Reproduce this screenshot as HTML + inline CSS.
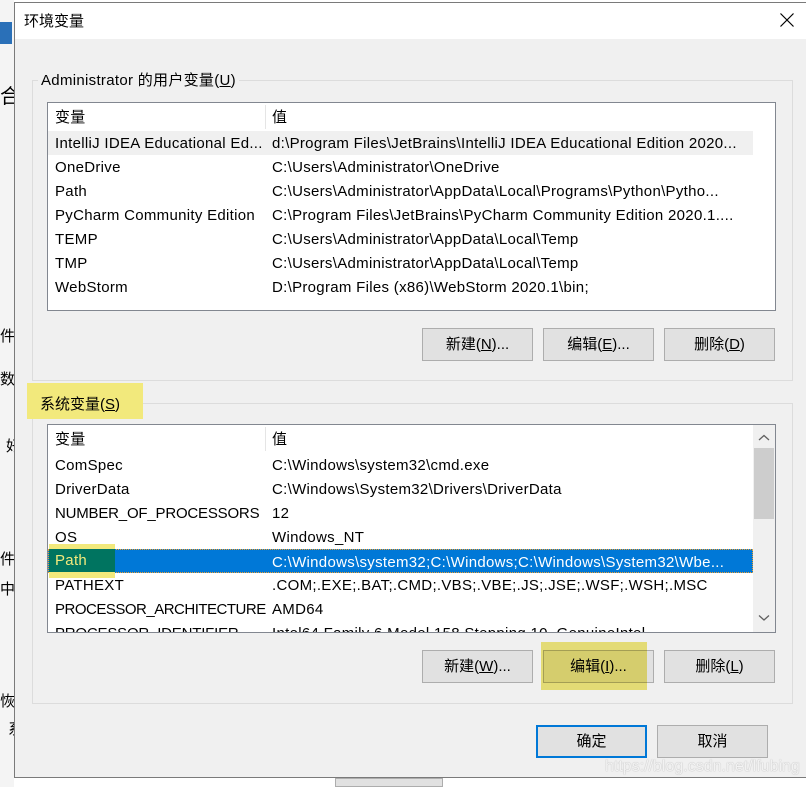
<!DOCTYPE html>
<html><head><meta charset="utf-8"><style>
*{box-sizing:border-box;margin:0;padding:0}
body{width:806px;height:787px;overflow:hidden;background:#fff;position:relative;font-family:"Liberation Sans","Noto Sans CJK SC",sans-serif;font-size:15px;color:#000}
.a{position:absolute}
.dlg{left:14px;top:2px;width:800px;height:776px;background:#f0f0f0;border:1px solid #7a7a7a}
.title{left:15px;top:3px;width:791px;height:36px;background:#fff}
.grp{border:1px solid #dcdcdc}
.lb{background:#fff;border:1px solid #828790;overflow:hidden}
.row{position:absolute;left:0;height:24px;line-height:25px;white-space:nowrap;width:705px;letter-spacing:0.3px}
.row span{position:absolute;left:7px}
.row b{font-weight:normal;position:absolute;left:224px}
.btn{position:absolute;width:111px;height:33px;background:#e1e1e1;border:1px solid #adadad;text-align:center;line-height:31px;font-size:15px}
u{text-decoration:underline}
.t{letter-spacing:-0.2px}
</style></head><body>
<div class="a" style="left:0;top:0;width:14px;height:787px;background:#f4f4f4"></div>
<div class="a" style="left:0;top:22px;width:12px;height:22px;background:#2a70b8"></div>
<div class="a" style="left:0;top:80px;font-size:20px;">合</div>
<div class="a" style="left:0;top:325px;">件</div>
<div class="a" style="left:0;top:368px;">数</div>
<div class="a" style="left:6px;top:435px;">好</div>
<div class="a" style="left:0;top:548px;">件</div>
<div class="a" style="left:0;top:578px;">中</div>
<div class="a" style="left:0;top:690px;">恢</div>
<div class="a" style="left:8px;top:718px;">系</div>
<div class="a" style="left:335px;top:778px;width:108px;height:9px;background:#e1e1e1;border:1px solid #adadad"></div>
<div class="a dlg"></div>
<div class="a title"></div>
<div class="a" style="left:24px;top:10px;font-size:15px">环境变量</div>
<svg class="a" style="left:780px;top:13px" width="14" height="14"><path d="M0.5 0.5L13.5 13.5M13.5 0.5L0.5 13.5" stroke="#000" stroke-width="1.2"/></svg>

<div class="a grp" style="left:32px;top:80px;width:761px;height:301px"></div>
<div class="a" style="left:38px;top:69px;background:#f0f0f0;padding:0 3px;letter-spacing:0.3px">Administrator 的用户变量(<u>U</u>)</div>
<div class="a lb" style="left:47px;top:102px;width:729px;height:209px">
 <div class="row" style="top:2px"><span>变量</span><b>值</b></div>
 <div class="a" style="left:217px;top:2px;width:1px;height:24px;background:#e5e5e5"></div>
 <div class="row" style="top:28px;background:#f0f0f0"><span>IntelliJ IDEA Educational Ed...</span><b>d:\Program Files\JetBrains\IntelliJ IDEA Educational Edition 2020...</b></div>
 <div class="row" style="top:52px"><span>OneDrive</span><b>C:\Users\Administrator\OneDrive</b></div>
 <div class="row" style="top:76px"><span>Path</span><b>C:\Users\Administrator\AppData\Local\Programs\Python\Pytho...</b></div>
 <div class="row" style="top:100px"><span>PyCharm Community Edition</span><b>C:\Program Files\JetBrains\PyCharm Community Edition 2020.1....</b></div>
 <div class="row" style="top:124px"><span>TEMP</span><b>C:\Users\Administrator\AppData\Local\Temp</b></div>
 <div class="row" style="top:148px"><span>TMP</span><b>C:\Users\Administrator\AppData\Local\Temp</b></div>
 <div class="row" style="top:172px"><span>WebStorm</span><b>D:\Program Files (x86)\WebStorm 2020.1\bin;</b></div>
</div>
<div class="btn" style="left:422px;top:328px">新建(<u>N</u>)...</div>
<div class="btn" style="left:543px;top:328px">编辑(<u>E</u>)...</div>
<div class="btn" style="left:664px;top:328px">删除(<u>D</u>)</div>

<div class="a grp" style="left:32px;top:403px;width:761px;height:301px"></div>
<div class="a" style="left:27px;top:383px;width:116px;height:36px;background:#f2e97c"></div>
<div class="a" style="left:40px;top:393px">系统变量(<u>S</u>)</div>
<div class="a lb" style="left:47px;top:424px;width:729px;height:209px">
 <div class="row" style="top:2px"><span>变量</span><b>值</b></div>
 <div class="a" style="left:217px;top:2px;width:1px;height:24px;background:#e5e5e5"></div>
 <div class="row" style="top:28px"><span>ComSpec</span><b>C:\Windows\system32\cmd.exe</b></div>
 <div class="row" style="top:52px"><span>DriverData</span><b>C:\Windows\System32\Drivers\DriverData</b></div>
 <div class="row" style="top:76px"><span class="t">NUMBER_OF_PROCESSORS</span><b>12</b></div>
 <div class="row" style="top:100px"><span>OS</span><b>Windows_NT</b></div>
 <div class="row" style="top:124px;background:#0078d7;color:#fff;border:1px dotted #f0a030"><span style="left:6px">Path</span><b style="left:223px">C:\Windows\system32;C:\Windows;C:\Windows\System32\Wbe...</b></div>
 <div class="row" style="top:148px"><span>PATHEXT</span><b>.COM;.EXE;.BAT;.CMD;.VBS;.VBE;.JS;.JSE;.WSF;.WSH;.MSC</b></div>
 <div class="row" style="top:172px"><span style="letter-spacing:-0.5px">PROCESSOR_ARCHITECTURE</span><b>AMD64</b></div>
 <div class="row" style="top:196px"><span class="t">PROCESSOR_IDENTIFIER</span><b>Intel64 Family 6 Model 158 Stepping 10, GenuineIntel</b></div>
 <div class="a" style="left:705px;top:0;width:22px;height:207px;background:#f0f0f0"></div>
 <div class="a" style="left:706px;top:23px;width:20px;height:71px;background:#cdcdcd"></div>
 <svg class="a" style="left:710px;top:9px" width="12" height="8"><path d="M1 6L6 1.5L11 6" stroke="#606060" stroke-width="1.3" fill="none"/></svg>
 <svg class="a" style="left:710px;top:189px" width="12" height="8"><path d="M1 1.5L6 6L11 1.5" stroke="#606060" stroke-width="1.3" fill="none"/></svg>
</div>
<div class="a" style="left:49px;top:544px;width:66px;height:34px;background:#f2e97c"></div>
<div class="a" style="left:49px;top:549px;width:66px;height:23px;background:#007460;color:#f2e97c;line-height:24px;padding-left:6px;letter-spacing:0.3px">Path</div>

<div class="btn" style="left:422px;top:650px">新建(<u>W</u>)...</div>
<div class="btn" style="left:543px;top:650px">编辑(<u>I</u>)...</div>
<div class="a" style="left:541px;top:642px;width:106px;height:48px;background:#f2e97c;mix-blend-mode:multiply"></div>
<div class="btn" style="left:664px;top:650px">删除(<u>L</u>)</div>

<div class="btn" style="left:536px;top:725px;border:2px solid #0078d7;line-height:29px">确定</div>
<div class="btn" style="left:657px;top:725px">取消</div>
<div class="a" style="left:605px;top:758px;color:rgba(255,255,255,0.85);font-size:16px;text-shadow:0 0 1px #999">https://blog.csdn.net/lfubing</div>
</body></html>
